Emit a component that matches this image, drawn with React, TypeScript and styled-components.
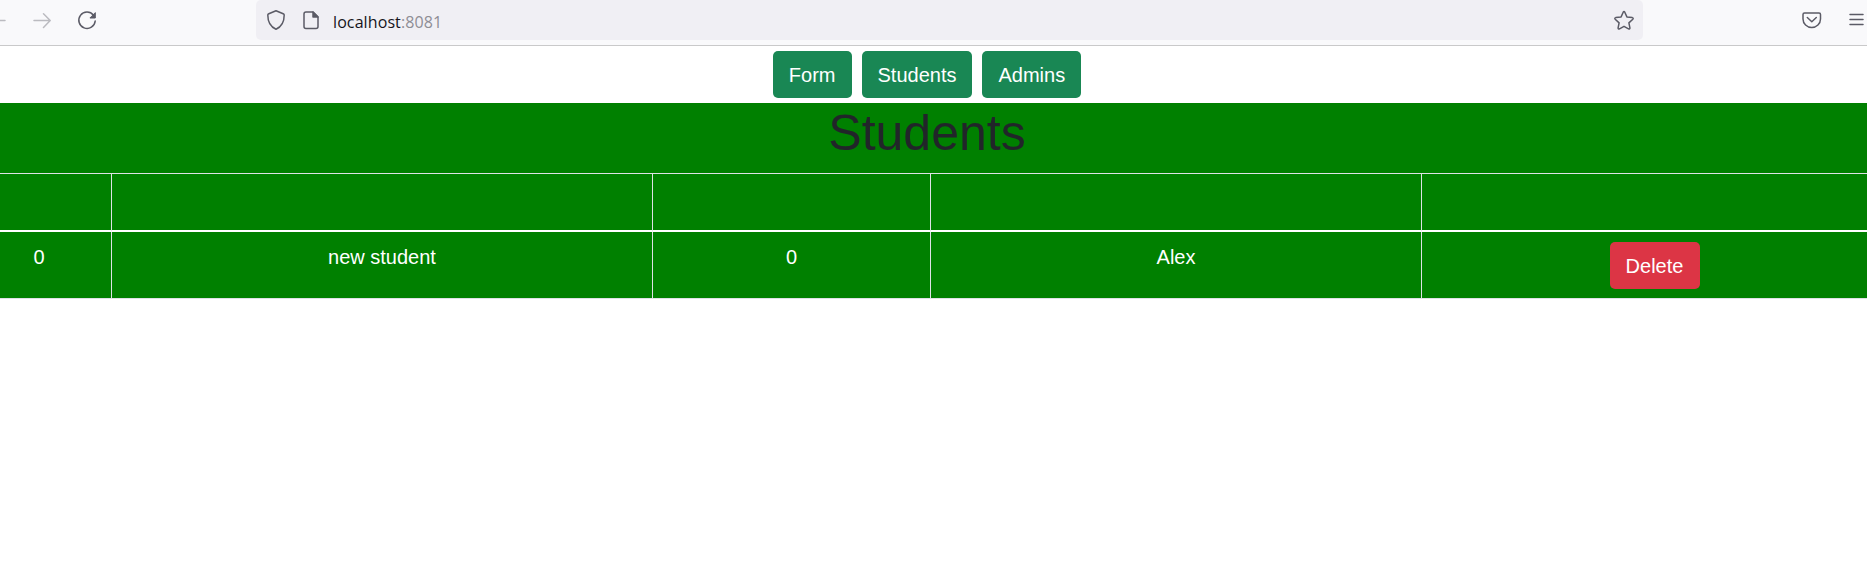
import React from "react";
import styled, { createGlobalStyle } from "styled-components";

const GlobalStyle = createGlobalStyle`
  *, *::before, *::after { box-sizing: border-box; }
  html, body { margin: 0; padding: 0; background: #fff; overflow: hidden; }
  body { font: 400 20px/30px "Liberation Sans", Arial, sans-serif; color: #212529; }
`;

const Screen = styled.div`
  height: 572px;
  overflow: hidden;
  background: #fff;
`;

const Toolbar = styled.header`
  display: flex;
  height: 46px;
  padding-bottom: 5px;
  background: #f9f9fb;
  border-bottom: 1px solid #c9c9ca;
`;

const NavIcons = styled.div`
  width: 256px;
  flex: none;
`;

const AddressBar = styled.div`
  display: flex;
  width: 1387px;
  height: 40px;
  flex: none;
  background: #f0eff4;
  border-radius: 5px;
`;

const SiteIcons = styled.div`
  width: 77px;
  flex: none;
`;

const Address = styled.div`
  flex: 1;
  padding-top: 7px;
  font: 400 16px/30px "Open Sans", "Noto Sans", sans-serif;
  letter-spacing: 0.1px;
  color: #15141a;
`;

const Port = styled.span`
  color: #8e8d94;
`;

const Icons = styled.svg`
  display: block;
  fill: none;
  stroke: #5b5b66;
  stroke-width: 1.5;
  stroke-linecap: round;
  stroke-linejoin: round;
`;

const Page = styled.main`
  width: 1920px;
  margin-left: -33px;
`;

const Links = styled.nav`
  display: flex;
  justify-content: center;
  gap: 10px;
  height: 57px;
  padding-top: 5px;
`;

const Button = styled.button<{ $tone: "success" | "danger" }>`
  height: 47px;
  padding: 0 16px;
  border: 0;
  border-radius: 5px;
  background: ${(p) => (p.$tone === "success" ? "#198754" : "#dc3545")};
  color: #fff;
  font: inherit;
  ${(p) => p.$tone === "danger" && "width: 90px;"}
`;

const Panel = styled.section`
  background: #008000;
`;

const Title = styled.h1`
  height: 70px;
  margin: 0;
  font-size: 50px;
  font-weight: 400;
  line-height: 60px;
  text-align: center;
`;

const Table = styled.div`
  display: grid;
  grid-template-columns: 144px 541px 278px 491px 466px;
  grid-template-rows: 59px 66px;
  border-bottom: 1px solid #dee2e6;
  color: #fff;
  text-align: center;
`;

const HeadCell = styled.div`
  border-top: 1px solid #dee2e6;
  border-bottom: 2px solid #fff;
  & + & { border-left: 1px solid #dee2e6; }
`;

const Cell = styled.div`
  padding-top: 10px;
  & + & { border-left: 1px solid #dee2e6; }
`;

export default function App() {
  return (
    <Screen>
      <GlobalStyle />
      <Toolbar>
        <NavIcons>
          <Icons width="256" height="40">
            <path d="M-8 20.5H5M34 20.5H50M43.500 13.800l6.700 6.700-6.700 7" stroke="#bbbbc0" />
            <path d="M93.5 15.2A8.2 8.2 0 1 0 95.2 21" />
            <path d="M95.3 13v5h-5z" fill="#5b5b66" strokeWidth="1" />
          </Icons>
        </NavIcons>
        <AddressBar>
          <SiteIcons>
            <Icons width="77" height="40">
              <path d="M20 10.7l-7.2 3c-.7.3-1 .7-1 1.4 0 7 3 12 8.2 14.2 5.2-2.2 8.2-7.2 8.2-14.2 0-.7-.3-1.1-1-1.4z" />
              <path d="M57 12h-7a2 2 0 0 0-2 2v12.500a2 2 0 0 0 2 2h10a2 2 0 0 0 2-2V17z" />
              <path d="M57 12v5h5z" fill="#5b5b66" />
            </Icons>
          </SiteIcons>
          <Address>localhost<Port>:8081</Port></Address>
          <Icons width="40" height="40">
            <path d="M20.200 12.200q.8-1.400 1.600 0l2.100 4.700 5.400.7q1.500.4.5 1.600l-3.900 3.700 1 5q0 1.500-1.400.9L21 26.300l-4.500 2.500q-1.400.6-1.400-.9l1-5-3.900-3.700q-1-1.200.5-1.600l5.400-.7z" />
          </Icons>
        </AddressBar>
        <Icons width="224" height="40">
          <path d="M161.500 13h14.500a1.500 1.500 0 0 1 1.500 1.500V19a8.700 8.400 0 0 1-17.500 0v-4.500a1.500 1.500 0 0 1 1.500-1.500zM164.300 17.500l4.500 4.200 4.500-4.200M207 14.500h13M207 19.500h13M207 24.500h13" />
        </Icons>
      </Toolbar>
      <Page>
        <Links>
          <Button $tone="success">Form</Button>
          <Button $tone="success">Students</Button>
          <Button $tone="success">Admins</Button>
        </Links>
        <Panel>
          <Title>Students</Title>
          <Table>
            <HeadCell /><HeadCell /><HeadCell /><HeadCell /><HeadCell />
            <Cell>0</Cell>
            <Cell>new student</Cell>
            <Cell>0</Cell>
            <Cell>Alex</Cell>
            <Cell><Button $tone="danger">Delete</Button></Cell>
          </Table>
        </Panel>
      </Page>
    </Screen>
  );
}
